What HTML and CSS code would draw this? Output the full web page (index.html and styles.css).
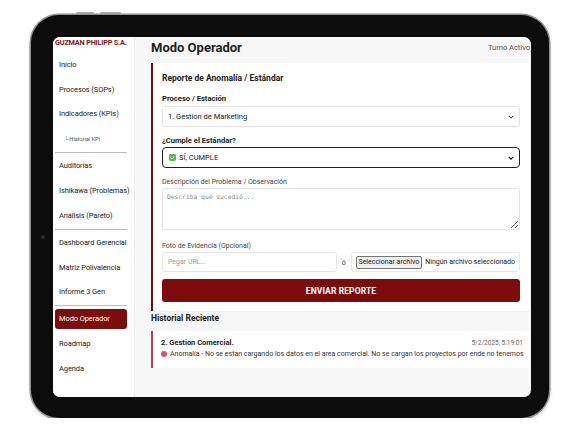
FILE: index.html
```html
<!DOCTYPE html>
<html lang="es">
<head>
    <meta charset="UTF-8">
    <meta name="viewport" content="width=device-width, initial-scale=1.0">
    <title>Modo Operador - Guzman Philipp S.A.</title>
    <link rel="stylesheet" href="styles.css">
</head>
<body>
<div class="tablet">
    <span class="hw-button vol-up"></span>
    <span class="hw-button vol-down"></span>
    <span class="camera"></span>

    <div class="screen">
        <aside class="sidebar">
            <div class="brand">GUZMAN PHILIPP S.A.</div>
            <nav class="nav">
                <div class="nav-item">Inicio</div>
                <div class="nav-item">Procesos (SOPs)</div>
                <div class="nav-item">Indicadores (KPIs)</div>
                <div class="nav-item sub">└ Historial KPI</div>
                <div class="nav-divider"></div>
                <div class="nav-item">Auditorías</div>
                <div class="nav-item">Ishikawa (Problemas)</div>
                <div class="nav-item">Análisis (Pareto)</div>
                <div class="nav-divider"></div>
                <div class="nav-item">Dashboard Gerencial</div>
                <div class="nav-item">Matriz Polivalencia</div>
                <div class="nav-item">Informe 3 Gen</div>
                <div class="nav-divider"></div>
                <div class="nav-item active">Modo Operador</div>
                <div class="nav-item">Roadmap</div>
                <div class="nav-item">Agenda</div>
            </nav>
        </aside>

        <main class="main">
            <header class="main-header">
                <h1 class="main-title">Modo Operador</h1>
                <span class="shift">Turno Activo</span>
            </header>

            <section class="card">
                <h3 class="card-title">Reporte de Anomalía / Estándar</h3>

                <div class="field">
                    <label class="field-label">Proceso / Estación</label>
                    <div class="control">
                        <span>1. Gestion de Marketing</span>
                        <svg class="chevron" viewBox="0 0 8 5"><path d="M1 1l3 3 3-3" fill="none" stroke="#222" stroke-width="1.3"/></svg>
                    </div>
                </div>

                <div class="field">
                    <label class="field-label tight">¿Cumple el Estándar?</label>
                    <div class="control strong">
                        <span class="check-option">
                            <svg class="check-box" viewBox="0 0 10 10"><rect width="10" height="10" rx="2" fill="#5cb85c"/><path d="M2.5 5.2l1.8 1.8 3.3-3.6" fill="none" stroke="#fff" stroke-width="1.4"/></svg>
                            SÍ, CUMPLE
                        </span>
                        <svg class="chevron" viewBox="0 0 8 5"><path d="M1 1l3 3 3-3" fill="none" stroke="#111" stroke-width="1.5"/></svg>
                    </div>
                </div>

                <div class="field wide">
                    <label class="field-label light">Descripción del Problema / Observación</label>
                    <textarea class="textarea" placeholder="Describa qué sucedió..."></textarea>
                </div>

                <div class="field evidence">
                    <label class="field-label light">Foto de Evidencia (Opcional)</label>
                    <div class="evidence-row">
                        <input class="url-input" type="text" placeholder="Pegar URL...">
                        <span class="or">ó</span>
                        <div class="file-box">
                            <span class="file-button">Seleccionar archivo</span>
                            <span class="file-name">Ningún archivo seleccionado</span>
                        </div>
                    </div>
                </div>

                <button class="submit">ENVIAR REPORTE</button>
            </section>

            <h4 class="section-title">Historial Reciente</h4>

            <div class="history-card">
                <div class="history-head">
                    <b>2. Gestion Comercial.</b>
                    <span class="history-time">5/2/2025, 5:19:01</span>
                </div>
                <div class="history-body">
                    <span class="dot"></span>
                    <span>Anomalía - No se estan cargando los datos en el area comercial. No se cargan los proyectos por ende no tenemos</span>
                </div>
            </div>
        </main>
    </div>
</div>
</body>
</html>
```

FILE: styles.css
```css
* {
    box-sizing: border-box;
}

body {
    margin: 0;
    background: #fff;
    font-family: Roboto, "Liberation Sans", sans-serif;
    padding: 15px 0 0 31px;
}

/* device frame */
.tablet {
    position: relative;
    width: 518px;
    height: 403px;
    padding: 22px 18px 21px 22px;
    background: #0c0c0c;
    border-radius: 28px;
    box-shadow: 0 0 0 1.5px #8e8e8e, 0 2px 4px rgba(0, 0, 0, 0.25);
}

.hw-button {
    position: absolute;
    top: -3px;
    height: 2px;
    background: #a9a9a9;
    border-radius: 1px;
}

.vol-up {
    left: 45px;
    width: 18px;
}

.vol-down {
    left: 69px;
    width: 21px;
}

.camera {
    position: absolute;
    left: 10px;
    top: 220px;
    width: 4px;
    height: 4px;
    border-radius: 50%;
    background: #2a2a2e;
}

.screen {
    display: flex;
    height: 100%;
    border-radius: 7px;
    overflow: hidden;
    background: #f7f7f8;
}

/* sidebar */
.sidebar {
    width: 82px;
    flex-shrink: 0;
    background: #fff;
    border-right: 1px solid #ececec;
    padding: 1px 7px 0 2px;
}

.brand {
    font-size: 7.3px;
    font-weight: 700;
    line-height: 10px;
    color: #8a1414;
    white-space: nowrap;
    margin-bottom: 4.75px;
    letter-spacing: -0.2px;
}

.nav {
    display: flex;
    flex-direction: column;
}

.nav-item {
    margin: 2.35px 0;
    padding: 5px 4px;
    font-size: 7.5px;
    line-height: 10px;
    color: #222;
    border-radius: 3px;
    white-space: nowrap;
    letter-spacing: -0.1px;
    cursor: pointer;
}

.nav-item.sub {
    padding-left: 9px;
    font-size: 5.8px;
    color: #555;
}

.nav-item.active {
    background: #7d0c0c;
    color: #fff;
}

.nav-divider {
    height: 1px;
    margin: 0.75px 0;
    background: #bdbdbd;
}

/* main column */
.main {
    flex: 1;
    min-width: 0;
    padding: 2px 1px 0 16px;
}

.main-header {
    display: flex;
    justify-content: space-between;
    align-items: center;
    height: 16px;
    margin-bottom: 8px;
}

.main-title {
    margin: 0;
    font-size: 13px;
    font-weight: 700;
    color: #1e1e1e;
}

.shift {
    font-size: 7.5px;
    color: #555;
}

.card {
    background: #fff;
    border-left: 2px solid #7a0c0c;
    border-radius: 0 3px 3px 0;
    padding: 9px 10px 9px 9px;
    box-shadow: 0 1px 2px rgba(0, 0, 0, 0.04);
}

.card-title {
    margin: 0 0 10px;
    font-size: 8.5px;
    font-weight: 700;
    line-height: 12px;
    color: #1b1b1b;
}

.field {
    margin-bottom: 9px;
}

.field.wide {
    margin-bottom: 11px;
}

.field.evidence {
    margin-bottom: 7px;
}

.field-label {
    display: block;
    margin-bottom: 2px;
    font-size: 7.6px;
    font-weight: 700;
    line-height: 10px;
    color: #1b1b1b;
}

.field-label.tight {
    margin-bottom: 1px;
}

.field-label.light {
    margin-bottom: 1px;
    font-size: 7px;
    font-weight: 400;
    color: #444;
}

.control {
    display: flex;
    align-items: center;
    justify-content: space-between;
    height: 21px;
    padding: 0 5px;
    border: 1px solid #e3e3e3;
    border-radius: 3px;
    font-size: 7.5px;
    color: #222;
}

.control.strong {
    border: 1.5px solid #1f1f1f;
    border-radius: 4px;
    padding-left: 6px;
}

.chevron {
    width: 6px;
    height: 4px;
}

.check-option {
    display: flex;
    align-items: center;
    gap: 3px;
}

.check-box {
    width: 7px;
    height: 7px;
}

.textarea {
    display: block;
    width: 100%;
    height: 42px;
    padding: 4px 4px;
    border: 1px solid #e3e3e3;
    border-radius: 3px;
    font-family: "DejaVu Sans Mono", monospace;
    font-size: 6.3px;
    resize: vertical;
    outline: none;
}

.textarea::placeholder {
    color: #8a8a8a;
}

.evidence-row {
    display: flex;
    align-items: center;
    height: 20px;
}

.url-input {
    width: 175px;
    height: 20px;
    padding: 0 5px;
    border: 1px solid #e6e6e6;
    border-radius: 3px;
    font-family: inherit;
    font-size: 7px;
    outline: none;
}

.url-input::placeholder {
    color: #9a9a9a;
}

.or {
    width: 14px;
    text-align: center;
    font-size: 7.5px;
    color: #444;
}

.file-box {
    flex: 1;
    display: flex;
    align-items: center;
    height: 20px;
    padding: 0 4px;
    border: 1px solid #e6e6e6;
    border-radius: 3px;
    font-size: 7px;
    color: #222;
    white-space: nowrap;
}

.file-button {
    padding: 1px 2px;
    border: 1px solid #767676;
    border-radius: 2px;
    background: #efefef;
    line-height: 9px;
}

.file-name {
    margin-left: 3px;
}

.submit {
    display: block;
    width: 100%;
    height: 23px;
    border: none;
    border-radius: 3px;
    background: #7e0b0b;
    color: #fff;
    font-family: inherit;
    font-size: 8.5px;
    font-weight: 700;
    letter-spacing: 0.1px;
}

/* recent history */
.section-title {
    margin: 2px 0 8px;
    font-size: 8.5px;
    font-weight: 700;
    line-height: 10px;
    color: #1b1b1b;
}

.history-card {
    background: #fff;
    border-left: 2px solid #c8344f;
    padding: 7px 5px 9px 8px;
}

.history-head {
    display: flex;
    justify-content: space-between;
    align-items: center;
    padding-right: 2px;
    font-size: 7.5px;
    line-height: 10px;
    color: #1b1b1b;
}

.history-time {
    font-size: 6.5px;
    color: #666;
}

.history-body {
    display: flex;
    align-items: center;
    gap: 3px;
    margin-top: 1px;
    font-size: 7px;
    line-height: 10px;
    color: #333;
    white-space: nowrap;
}

.dot {
    flex-shrink: 0;
    width: 6px;
    height: 6px;
    border-radius: 50%;
    background: #e0506e;
}
```
